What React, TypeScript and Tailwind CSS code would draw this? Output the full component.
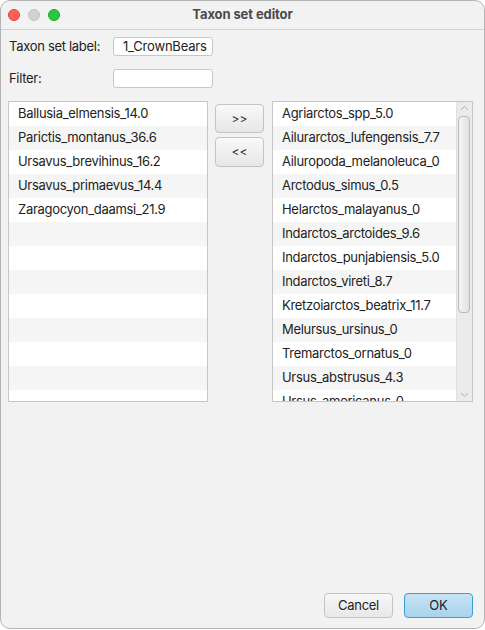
import React from "react";

const leftItems = [
  "Ballusia_elmensis_14.0",
  "Parictis_montanus_36.6",
  "Ursavus_brevihinus_16.2",
  "Ursavus_primaevus_14.4",
  "Zaragocyon_daamsi_21.9",
];

const rightItems = [
  "Agriarctos_spp_5.0",
  "Ailurarctos_lufengensis_7.7",
  "Ailuropoda_melanoleuca_0",
  "Arctodus_simus_0.5",
  "Helarctos_malayanus_0",
  "Indarctos_arctoides_9.6",
  "Indarctos_punjabiensis_5.0",
  "Indarctos_vireti_8.7",
  "Kretzoiarctos_beatrix_11.7",
  "Melursus_ursinus_0",
  "Tremarctos_ornatus_0",
  "Ursus_abstrusus_4.3",
  "Ursus_americanus_0",
];

function Rows({ items, total }: { items: string[]; total: number }) {
  const rows = [];
  for (let i = 0; i < total; i++) {
    rows.push(
      <div
        key={i}
        className={`h-[24px] shrink-0 flex items-center pl-[9px] whitespace-nowrap ${
          i % 2 === 0 ? "bg-white" : "bg-[#f5f5f5]"
        }`}
      >
        {items[i] ?? ""}
      </div>
    );
  }
  return <>{rows}</>;
}

export default function App() {
  return (
    <div
      className="w-[485px] h-[630px] bg-white text-[13px] text-[#222222]"
      style={{ fontFamily: "Inter, 'Liberation Sans', sans-serif" }}
    >
      <div className="w-[485px] h-[629px] flex flex-col bg-[#f2f2f2] border border-[#b4b4b4] rounded-[10px] overflow-hidden">
        {/* title bar */}
        <div className="h-[29px] shrink-0 border-b border-[#d2d2d2] relative flex items-center justify-center">
          <div className="absolute left-[7px] top-[8px] flex gap-[8px]">
            <div className="w-[12px] h-[12px] rounded-full bg-[#fe5f57] border border-[#e2463f]" />
            <div className="w-[12px] h-[12px] rounded-full bg-[#d1d1d1] border border-[#c2c2c2]" />
            <div className="w-[12px] h-[12px] rounded-full bg-[#28c840] border border-[#1aab29]" />
          </div>
          <span className="font-bold text-[#4a4a4a] text-[13px] tracking-[-0.1px]">Taxon set editor</span>
        </div>

        {/* body */}
        <div className="flex-1 flex flex-col pl-[7px] pr-[11px]">
          <div className="mt-[7px] h-[19px] flex items-center">
            <span className="w-[105px] pl-[1px] tracking-[-0.3px]">Taxon set label:</span>
            <div className="w-[100px] h-[19px] bg-white border border-[#c8c8c8] rounded-[3px] flex items-center pl-[9px] tracking-[-0.2px]">
              1_CrownBears
            </div>
          </div>
          <div className="mt-[13px] h-[19px] flex items-center">
            <span className="w-[105px] pl-[1px] tracking-[-0.3px]">Filter:</span>
            <div className="w-[100px] h-[19px] bg-white border border-[#c8c8c8] rounded-[3px]" />
          </div>

          <div className="mt-[13px] flex items-start">
            <div className="w-[200px] h-[301px] border border-[#c6c6c6] bg-white flex flex-col overflow-hidden tracking-[-0.3px]">
              <Rows items={leftItems} total={13} />
            </div>
            <div className="ml-[7px] pt-[3px] flex flex-col gap-[4px]">
              <button className="w-[49px] h-[29px] rounded-[4px] border border-[#c3c3c3] bg-gradient-to-b from-[#f9f9f9] to-[#e6e6e6] text-[12px] text-[#333] flex items-center justify-center">
                &gt;&gt;
              </button>
              <button className="w-[49px] h-[30px] rounded-[4px] border border-[#c3c3c3] bg-gradient-to-b from-[#f9f9f9] to-[#e6e6e6] text-[12px] text-[#333] flex items-center justify-center">
                &lt;&lt;
              </button>
            </div>
            <div className="ml-[8px] w-[201px] h-[301px] border border-[#c6c6c6] bg-white relative overflow-hidden tracking-[-0.3px]">
              <div className="flex flex-col">
                <Rows items={rightItems} total={13} />
              </div>
              {/* scrollbar */}
              <div className="absolute right-0 top-0 bottom-0 w-[16px] bg-[#ebebeb] border-l border-[#e0e0e0]">
                <svg className="absolute left-[3px] top-[3px]" width="9" height="6" viewBox="0 0 9 6">
                  <path d="M1 5 L4.5 1.5 L8 5" fill="none" stroke="#b0b0b0" strokeWidth="1" />
                </svg>
                <div className="absolute left-[1px] top-[14px] w-[12px] h-[197px] rounded-[4px] border border-[#b9b9b9] bg-gradient-to-r from-[#f3f3f3] to-[#e2e2e2]" />
                <svg className="absolute left-[3px] bottom-[3px]" width="9" height="6" viewBox="0 0 9 6">
                  <path d="M1 1 L4.5 4.5 L8 1" fill="none" stroke="#b0b0b0" strokeWidth="1" />
                </svg>
              </div>
            </div>
          </div>

          <div className="flex-1" />
          <div className="flex justify-end gap-[11px] pb-[10px]">
            <button className="w-[69px] h-[25px] rounded-[4px] border border-[#c3c3c3] bg-gradient-to-b from-[#f7f7f7] to-[#e8e8e8] text-[13px] text-[#222] flex items-center justify-center tracking-[-0.3px]">
              Cancel
            </button>
            <button className="w-[69px] h-[25px] rounded-[4px] border border-[#3a9fd9] bg-gradient-to-b from-[#c5e3f4] to-[#a9d3ec] text-[13px] text-[#222] flex items-center justify-center">
              OK
            </button>
          </div>
        </div>
      </div>
    </div>
  );
}
